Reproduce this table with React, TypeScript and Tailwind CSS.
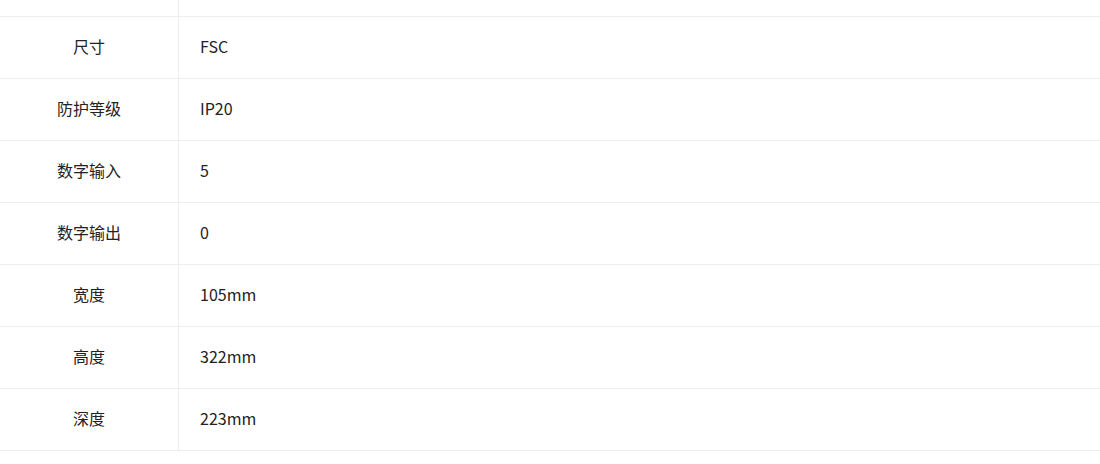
import React from 'react';

const specs = [
  { label: '尺寸', value: 'FSC' },
  { label: '防护等级', value: 'IP20' },
  { label: '数字输入', value: '5' },
  { label: '数字输出', value: '0' },
  { label: '宽度', value: '105mm' },
  { label: '高度', value: '322mm' },
  { label: '深度', value: '223mm' },
];

const App: React.FC = () => {
  return (
    <div
      className="w-[1100px] h-[464px] bg-white text-[16px] text-[#222] overflow-hidden"
      style={{ fontFamily: '"Microsoft YaHei", "Noto Sans CJK SC", sans-serif' }}
    >
      {/* cut-off row at the top */}
      <div className="flex h-[17px] border-b border-[#eeeeee]">
        <div className="w-[179px] border-r border-[#eeeeee]" />
        <div className="flex-1" />
      </div>
      {specs.map((row) => (
        <div key={row.label} className="flex h-[62px] border-b border-[#eeeeee]">
          <div className="w-[179px] shrink-0 border-r border-[#eeeeee] flex items-center justify-center pb-[3px]">
            {row.label}
          </div>
          <div className="flex-1 flex items-center pl-[21px] pb-[3px]">{row.value}</div>
        </div>
      ))}
    </div>
  );
};

export default App;
